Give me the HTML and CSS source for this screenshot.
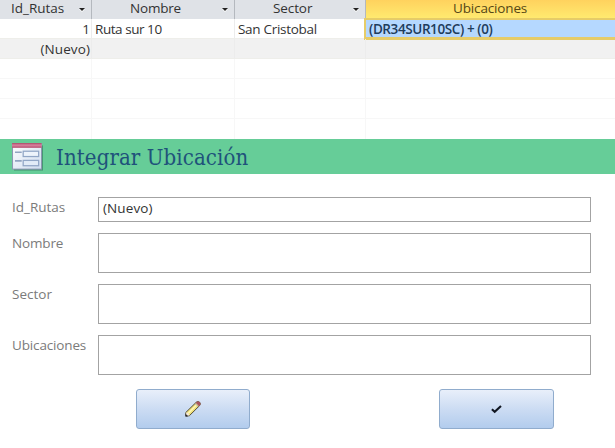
FILE: index.html
```html
<!DOCTYPE html>
<html lang="es">
<head>
<meta charset="utf-8">
<title>Integrar Ubicación</title>
<link rel="stylesheet" href="styles.css">
</head>
<body>
<section class="sheet">
  <div class="row head">
    <div class="cell h-id"><span>Id_Rutas</span><i class="arrow"></i></div>
    <div class="cell h-name"><span>Nombre</span><i class="arrow"></i></div>
    <div class="cell h-sector"><span>Sector</span><i class="arrow"></i></div>
    <div class="cell active"><span>Ubicaciones</span></div>
  </div>
  <div class="row">
    <div class="cell num">1</div>
    <div class="cell t-route">Ruta sur 10</div>
    <div class="cell t-sector">San Cristobal</div>
    <div class="cell selected"><span>(DR34SUR10SC) + (0)</span></div>
  </div>
  <div class="row new">
    <div class="cell num">(Nuevo)</div><div class="cell"></div><div class="cell"></div><div class="cell"></div>
  </div>
  <div class="row empty"><div class="cell"></div><div class="cell"></div><div class="cell"></div><div class="cell"></div></div>
  <div class="row empty"><div class="cell"></div><div class="cell"></div><div class="cell"></div><div class="cell"></div></div>
  <div class="row empty"><div class="cell"></div><div class="cell"></div><div class="cell"></div><div class="cell"></div></div>
  <div class="row empty last"><div class="cell"></div><div class="cell"></div><div class="cell"></div><div class="cell"></div></div>
</section>
<header class="banner">
  <svg class="form-icon" width="33" height="29" viewBox="0 0 34 30">
    <defs>
      <linearGradient id="paper" x1="0" y1="0" x2="1" y2="1"><stop offset="0" stop-color="#fff"/><stop offset="1" stop-color="#cfdcef"/></linearGradient>
      <linearGradient id="bar" x1="0" y1="0" x2="0" y2="1"><stop offset="0" stop-color="#a84a66"/><stop offset=".45" stop-color="#d9829f"/><stop offset="1" stop-color="#b44c6e"/></linearGradient>
    </defs>
    <rect x="2" y="2.5" width="30" height="26" fill="#34785c" opacity=".65"/>
    <rect x=".5" y=".5" width="30" height="26.5" fill="url(#paper)" stroke="#8b94b0"/>
    <rect x="0" y="0" width="30.5" height="5" fill="url(#bar)"/>
    <path d="M3 9.5h7M3 18.5h7" stroke="#91a4c1" stroke-width="1.6"/>
    <rect x="11.5" y="8.5" width="16" height="5.500" fill="#edf3fb" stroke="#91a6c6" stroke-width="1.3"/>
    <rect x="11.5" y="18" width="16" height="5.500" fill="#e2ebf7" stroke="#91a6c6" stroke-width="1.3"/>
  </svg>
  <h1>Integrar Ubicación</h1>
</header>
<main class="form">
  <div class="field short"><label class="l-id">Id_Rutas</label><div class="box">(Nuevo)</div></div>
  <div class="field"><label class="l-name">Nombre</label><div class="box"></div></div>
  <div class="field"><label class="l-sector">Sector</label><div class="box"></div></div>
  <div class="field"><label class="l-loc">Ubicaciones</label><div class="box"></div></div>
  <div class="actions">
    <button class="edit" aria-label="Editar">
      <svg width="16" height="16" viewBox="0 0 16 16">
        <path d="M.8 15.200V11.500L11.300 1.200Q13-.1 14.700 1.300Q16 3 14.500 4.700L4.400 14.700Z" fill="#f2e27c" stroke="#514b35" stroke-width="1"/>
        <path d="M3.200 12.300L12.400 3.100" stroke="#fffbc4" stroke-width="1.200"/>
        <path d="M1.300 14.600V11.800L2 11.200L4.500 13.900L4 14.400Z" fill="#f5e9e0"/>
        <path d="M.5 15.500V12.800L3.200 15.300Z" fill="#262638"/>
        <path d="M10.700 1.800L12 .7Q13.700 0 15 1.300Q15.900 2.800 15.200 4L14 5.200Z" fill="#a95460"/>
        <path d="M10 2.400L13.400 5.700" stroke="#a9a9ac" stroke-width="1"/>
      </svg>
    </button>
    <button class="accept" aria-label="Aceptar">
      <svg width="11" height="9" viewBox="0 0 11 9"><path d="M.9 4.200L3.700 6.800L10 1" fill="none" stroke="#111722" stroke-width="2.100"/></svg>
    </button>
  </div>
</main>
</body>
</html>
```

FILE: styles.css
```css
* { box-sizing: border-box; }
body {
  margin: 0;
  width: 615px;
  height: 448px;
  overflow: hidden;
  background: #fff;
  color: #333;
  font: 13.5px/21px "Open Sans", "Noto Sans", sans-serif;
}
.sheet { height: 139px; }
.row {
  display: grid;
  grid-template-columns: 92px 143px 131px 1fr;
  grid-template-rows: 100%;
  height: 20px;
}
.cell {
  border-right: 1px solid #ececec;
  border-bottom: 1px solid #eeeeea;
  white-space: nowrap;
}
.cell:last-child { border-right: 0; }
.head { height: 19px; line-height: 17px; }
.head .cell {
  display: flex;
  justify-content: space-between;
  background: #dfe2e7;
  border-right-color: #b4b8be;
  border-bottom: 0;
  padding-right: 6px;
}
.h-id { padding-left: 11px; }
.h-name { padding-left: 38px; letter-spacing: -.2px; }
.h-sector { padding-left: 38px; letter-spacing: -.1px; }
.head .active {
  justify-content: flex-start;
  padding-left: 87px;
  background: linear-gradient(#ffd25e, #ffeb70);
  color: #554715;
  letter-spacing: -.15px;
}
.arrow {
  width: 0;
  height: 0;
  margin-top: 8px;
  border: 3px solid transparent;
  border-top-color: #222;
  border-bottom: 0;
  filter: drop-shadow(0 1px 0 #fff);
}
.num { text-align: right; padding-right: 1px; letter-spacing: .1px; }
.t-route { padding-left: 3px; letter-spacing: -.45px; }
.t-sector { padding-left: 3px; letter-spacing: -.3px; }
.row .selected {
  margin: -1px 0 0 -2px;
  height: 22px;
  border: solid #e6cc68;
  border-width: 2px 0 3px 2px;
  background: #b5d8ff;
  color: #1e3c5b;
  padding-left: 3px;
  line-height: 19px;
  font-weight: 600;
  font-size: 13.5px;
  letter-spacing: -.4px;
}
.new { background: #f1f1f1; }
.empty .cell { border-color: #f7f7f7; }
.last .cell { border-bottom: 0; }
.banner {
  display: flex;
  height: 35px;
  padding-left: 12px;
  background: #66cd98;
}
.form-icon { margin-top: 4px; }
h1 {
  margin: 0 0 0 11px;
  color: #20527b;
  font: 400 22px/37px "DejaVu Serif Condensed", "DejaVu Serif", serif;
  font-stretch: condensed;
  letter-spacing: .1px;
  white-space: nowrap;
}
.form {
  display: flex;
  flex-direction: column;
  gap: 11px;
  padding: 23px 24px 0 12px;
}
.field {
  display: grid;
  grid-template-columns: 86px 493px;
  height: 40px;
  color: #7b7b7b;
}
.short { height: 25px; }
.l-name, .l-loc { letter-spacing: -.15px; }
.box {
  border: 1px solid #a3a3a3;
  padding: 0 0 0 4px;
  color: #333;
  letter-spacing: .1px;
}
.actions {
  display: flex;
  gap: 189px;
  margin: 3px 0 0 124px;
}
button {
  display: flex;
  align-items: center;
  justify-content: center;
  height: 40px;
  padding: 0;
  border: 1px solid #90accd;
  border-radius: 3px;
  background: linear-gradient(#e8effa, #ccdcf3 50%, #b2cced);
}
.edit { width: 114px; }
.accept { width: 115px; }
```
